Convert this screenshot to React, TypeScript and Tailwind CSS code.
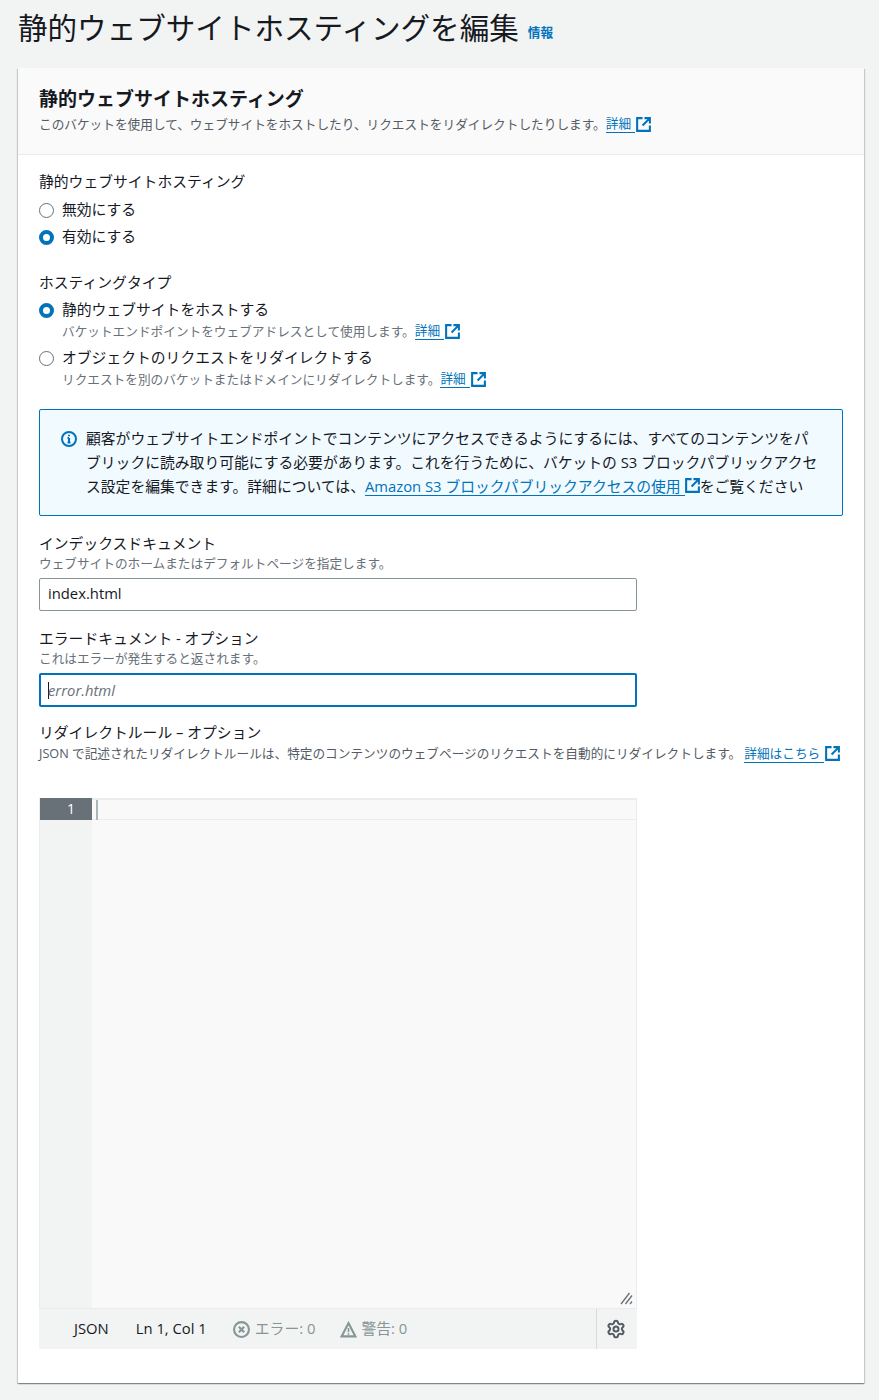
import React from 'react';
import { Settings } from 'lucide-react';

const LINK = 'text-[#0073bb] border-b border-[#0073bb]';
// line-height + bottom padding keeps the flow height but sits the glyphs 1px higher
const LABEL = 'text-[14.8px] leading-[20px] pb-[2px]';
const HINT = 'text-[12.67px] leading-[17px] pb-[2px] text-[#687078]';

const ExternalIcon: React.FC<{ size?: number }> = ({ size = 15 }) => (
  <svg width={size} height={size} viewBox="0 0 16 16" fill="none" stroke="#0073bb" strokeWidth="2.2" className="inline-block shrink-0">
    <path d="M7 1.2H1.2v13.6h13.6V9" />
    <path d="M9 1.2h5.8V7M14.8 1.2 7 9" />
  </svg>
);

const Radio: React.FC<{ checked?: boolean }> = ({ checked }) =>
  checked ? (
    <span className="w-[15px] h-[15px] rounded-full border-[4.5px] border-[#0073bb] bg-white shrink-0" />
  ) : (
    <span className="w-[15px] h-[15px] rounded-full border border-[#687078] bg-white shrink-0" />
  );

const RadioRow: React.FC<{ checked?: boolean; className?: string; children: React.ReactNode }> = ({ checked, className, children }) => (
  <div className={`flex items-center gap-[8px] text-[14.8px] h-[22px] ${className}`}>
    <Radio checked={checked} />
    <span className="leading-[20px] pb-[2px]">{children}</span>
  </div>
);

const DetailLink: React.FC<{ label?: string; className?: string }> = ({ label = '詳細', className = '' }) => (
  <span className={`inline-flex items-center gap-[1px] ${className}`}>
    <span className={`${LINK} leading-[17px] pr-[4px]`}>{label}</span>
    <ExternalIcon />
  </span>
);

export default function App() {
  return (
    <div
      className="w-[879px] h-[1400px] bg-[#f2f3f3] text-[#16191f] px-[18px] overflow-hidden"
      style={{ fontFamily: '"Open Sans", "Noto Sans CJK JP", sans-serif' }}
    >
      <div className="h-[68px] flex items-start pt-[7px]">
        <h1 className="text-[29.57px] leading-[42px] font-normal">静的ウェブサイトホスティングを編集</h1>
        <span className="text-[12.67px] font-bold text-[#0073bb] ml-[9px] mt-[15px] leading-[20px]">情報</span>
      </div>

      <div className="w-[846px] h-[1315px] bg-white shadow-[0_1px_1px_0_rgba(0,28,36,0.3),1px_1px_1px_0_rgba(0,28,36,0.15),-1px_1px_1px_0_rgba(0,28,36,0.15)]">
        <div className="h-[87px] bg-[#fafafa] border-b border-[#eaeded] px-[21px] pt-[18px]">
          <h2 className="text-[19px] leading-[26px] font-bold">静的ウェブサイトホスティング</h2>
          <p className="text-[12.67px] leading-[20px] text-[#545b64] mt-[2px] flex items-center">
            このバケットを使用して、ウェブサイトをホストしたり、リクエストをリダイレクトしたりします。
            <DetailLink />
          </p>
        </div>

        <div className="px-[21px] pt-[16px]">
          <div className={LABEL}>静的ウェブサイトホスティング</div>
          <RadioRow className="mt-[6px]">無効にする</RadioRow>
          <RadioRow checked className="mt-[5px]">有効にする</RadioRow>

          <div className={`${LABEL} mt-[24px]`}>ホスティングタイプ</div>
          <RadioRow checked className="mt-[5px]">静的ウェブサイトをホストする</RadioRow>
          <div className="pl-[23px] text-[12.67px] h-[20px] text-[#687078] flex items-center">
            バケットエンドポイントをウェブアドレスとして使用します。
            <DetailLink />
          </div>
          <RadioRow className="mt-[6px]">オブジェクトのリクエストをリダイレクトする</RadioRow>
          <div className="pl-[23px] text-[12.67px] h-[20px] text-[#687078] flex items-center">
            リクエストを別のバケットまたはドメインにリダイレクトします。
            <DetailLink />
          </div>

          <div className="mt-[20px] h-[107px] border border-[#0073bb] rounded-[2px] bg-[#f1faff] pl-[21px] pt-[16px] flex gap-[9px]">
            <svg width="16" height="16" viewBox="0 0 16 16" className="shrink-0 mt-[5px]">
              <circle cx="8" cy="8" r="7" fill="none" stroke="#0073bb" strokeWidth="2" />
              <path d="M8 7v4.5M6.5 11.5h3M6.5 7H8" fill="none" stroke="#0073bb" strokeWidth="2" />
              <circle cx="8" cy="4.5" r="1" fill="#0073bb" />
            </svg>
            <p className="text-[14.8px] leading-[24px] w-[735px]">
              顧客がウェブサイトエンドポイントでコンテンツにアクセスできるようにするには、すべてのコンテンツをパブリックに読み取り可能にする必要があります。これを行うために、バケットの S3 ブロックパブリックアクセス設定を編集できます。詳細については、
              <span className={`${LINK} inline-block leading-[17px] pr-[4px]`}>Amazon S3 ブロックパブリックアクセスの使用</span>
              <span className="inline-block align-[-1px] relative -top-[4px]"><ExternalIcon size={15} /></span>
              をご覧ください
            </p>
          </div>

          <div className={`${LABEL} mt-[17px]`}>インデックスドキュメント</div>
          <div className={HINT}>ウェブサイトのホームまたはデフォルトページを指定します。</div>
          <div className="mt-[4px] w-[598px] h-[33px] border border-[#879596] rounded-[2px] px-[8px] text-[14.8px] leading-[28px]">index.html</div>

          <div className={`${LABEL} mt-[17px]`}>エラードキュメント - オプション</div>
          <div className={HINT}>これはエラーが発生すると返されます。</div>
          <div className="mt-[4px] w-[598px] h-[34px] border-2 border-[#0073bb] rounded-[2px] px-[7px] text-[14.8px] italic text-[#687078] flex items-center">
            <span className="w-[1px] h-[17px] bg-[#16191f] -mr-[1px]" />
            <span className="leading-[20px] pb-[1px]">error.html</span>
          </div>

          <div className={`${LABEL} mt-[15px]`}>リダイレクトルール – オプション</div>
          <div className="text-[12.67px] h-[19px] text-[#545b64] flex items-center whitespace-nowrap">
            JSON で記述されたリダイレクトルールは、特定のコンテンツのウェブページのリクエストを自動的にリダイレクトします。
            <DetailLink label="詳細はこちら" className="ml-[3px]" />
          </div>

          <div className="mt-[35px] w-[598px] h-[551px] flex flex-col">
            <div className="flex-1 flex bg-[#f9f9f9] border-x border-[#eaeded] relative">
              <div className="w-[52px] bg-[#f2f3f3] shrink-0">
                <div className="h-[22px] w-[52px] bg-[#687078] text-white text-[14px] leading-[22px] text-right pr-[17px]">1</div>
              </div>
              <div className="flex-1 h-[22px] border-t-2 border-b border-[#eaeded] relative">
                <span className="absolute left-[4px] top-0 w-[2px] h-[20px] bg-[#aab7b8]" />
              </div>
              <svg width="13" height="13" viewBox="0 0 13 13" className="absolute right-[3px] bottom-[3px]" stroke="#687078" strokeWidth="1.3">
                <path d="M1 12 9.5 1M5.5 12 12 3.5M10 12l2-2.5" />
              </svg>
            </div>
            <div className="h-[41px] bg-[#f2f3f3] border-t border-[#eaeded] flex items-center text-[14.8px] pl-[35px] relative">
              <span className="leading-[20px] pb-[2px]">JSON</span>
              <span className="ml-[27px] leading-[20px] pb-[2px]">Ln 1, Col 1</span>
              <span className="ml-[26px] flex items-center gap-[5px] text-[#879596]">
                <svg width="17" height="17" viewBox="0 0 16 16" fill="none" stroke="#879596" strokeWidth="2">
                  <circle cx="8" cy="8" r="7" />
                  <path d="m5.5 5.5 5 5M10.5 5.5l-5 5" />
                </svg>
                <span className="leading-[20px] pb-[2px]">エラー: 0</span>
              </span>
              <span className="ml-[25px] flex items-center gap-[4px] text-[#879596]">
                <svg width="17" height="17" viewBox="0 0 16 16" fill="none" stroke="#879596" strokeWidth="2">
                  <path d="M8 2 1.5 14.5h13L8 2Z" />
                  <path d="M8 6.5v4M8 11.5v1.5" strokeWidth="1.5" />
                </svg>
                <span className="leading-[20px] pb-[2px]">警告: 0</span>
              </span>
              <div className="absolute right-0 top-0 h-full w-[41px] border-l border-[#d5dbdb] flex items-center justify-center pr-[2px]">
                <Settings size={20} strokeWidth={2.4} className="text-[#545b64]" />
              </div>
            </div>
          </div>
        </div>
      </div>
    </div>
  );
}
